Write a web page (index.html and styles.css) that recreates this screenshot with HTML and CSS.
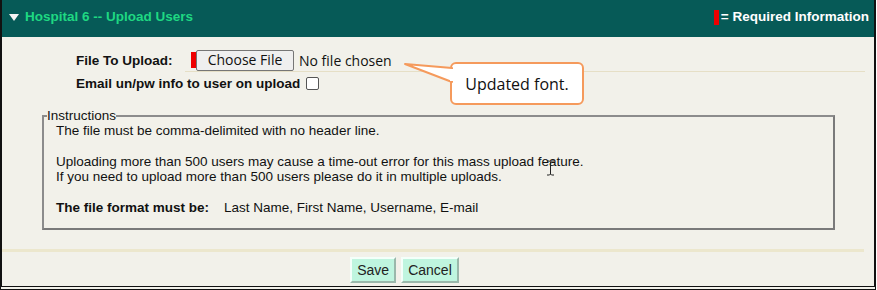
FILE: index.html
```html
<!DOCTYPE html>
<html lang="en">
<head>
  <meta charset="UTF-8" />
  <title>Upload Users</title>
  <link rel="stylesheet" href="styles.css">
</head>
<body>
  <div class="frame">
    <div class="panel-head">
      <div class="head-left">
        <span class="arrow"></span>
        <span class="head-title">Hospital 6 -- Upload Users</span>
      </div>
      <div class="head-right">
        <span class="req-mark"></span>
        <span>= Required Information</span>
      </div>
    </div>

    <div class="panel-body">
      <div class="form-row row-file">
        <label class="row-label">File To Upload:</label>
        <div class="field">
          <span class="req-mark"></span>
          <button class="file-btn">Choose File</button>
          <span class="file-name">No file chosen</span>
        </div>
      </div>
      <div class="form-row row-email">
        <label class="row-label">Email un/pw info to user on upload</label>
        <input type="checkbox" class="check">
      </div>

      <fieldset class="instructions">
        <legend>Instructions</legend>
        <p>The file must be comma-delimited with no header line.</p>
        <p>Uploading more than 500 users may cause a time-out error for this mass upload feature.<br>
        If you need to upload more than 500 users please do it in multiple uploads.</p>
        <p><b class="fmt-label">The file format must be:</b>Last Name, First Name, Username, E-mail</p>
      </fieldset>

      <div class="divider"></div>

      <div class="actions">
        <button class="act-btn">Save</button>
        <button class="act-btn">Cancel</button>
      </div>
    </div>

    <div class="callout">
      <svg class="callout-tail" width="50" height="24" viewBox="0 0 50 24">
        <polygon points="1,2 48,6 48,20" fill="#fff" stroke="#f59a5c" stroke-width="2" stroke-linejoin="round"/>
        <rect x="46" y="7" width="5" height="12" fill="#fff"/>
      </svg>
      <div class="callout-box">Updated font.</div>
    </div>

    <svg class="ibeam" width="9" height="16" viewBox="0 0 9 16">
      <path d="M1 1h2.5l1 1 1-1H8M4.5 2v12M1 15h2.5l1-1 1 1H8" fill="none" stroke="#222" stroke-width="1"/>
    </svg>
  </div>
</body>
</html>
```

FILE: styles.css
```css
* {
  box-sizing: border-box;
}
body {
  margin: 0;
  background: #fff;
  font-family: "Liberation Sans", Arial, sans-serif;
}
.frame {
  position: relative;
  width: 876px;
  height: 290px;
  background: #f2f1ea;
  border-left: 2px solid #111;
  border-right: 2px solid #111;
  border-bottom: 4px double #111;
}
.panel-head {
  height: 37px;
  background: #065a57;
  display: flex;
  justify-content: space-between;
  align-items: flex-start;
  padding: 9px 5px 0 7px;
}
.head-left {
  display: flex;
  align-items: center;
}
.arrow {
  width: 0;
  height: 0;
  border-left: 5px solid transparent;
  border-right: 5px solid transparent;
  border-top: 7px solid #f4f4f4;
  margin-right: 6px;
}
.head-title {
  color: #1fd882;
  font-weight: bold;
  font-size: 13.5px;
  line-height: 16px;
}
.head-right {
  display: flex;
  align-items: center;
  color: #fff;
  font-weight: bold;
  font-size: 13.5px;
  line-height: 16px;
}
.head-right .req-mark {
  height: 15px;
  margin-right: 2px;
}
.req-mark {
  display: inline-block;
  width: 5px;
  height: 16px;
  background: #ee0000;
}
.panel-body {
  padding-top: 12px;
}
.form-row {
  display: flex;
  align-items: center;
  padding-left: 74px;
}
.row-label {
  font-weight: bold;
  font-size: 13.5px;
  color: #111;
}
.row-file .row-label {
  width: 115px;
}
.row-file {
  height: 22px;
}
.field {
  display: flex;
  align-items: center;
  height: 22px;
  border-bottom: 1px solid #e6dfc6;
  width: 680px;
  margin-left: -6px;
  padding-left: 6px;
  margin-top: 1px;
}
.file-btn {
  font-family: "Open Sans", "Liberation Sans", sans-serif;
  font-size: 14px;
  height: 21px;
  width: 98px;
  padding: 0;
  margin: 0 5px 0 0;
  background: #efefef;
  border: 1px solid #767676;
  border-radius: 2px;
  color: #111;
  line-height: 18px;
}
.file-name {
  font-family: "Open Sans", "Liberation Sans", sans-serif;
  font-size: 14px;
  color: #111;
}
.row-email {
  margin-top: 4px;
  height: 16px;
}
.check {
  width: 13px;
  height: 13px;
  margin: 0 0 0 6px;
  appearance: none;
  border: 1px solid #555;
  border-radius: 2px;
  background: #fff;
}
.instructions {
  margin: 18px 0 0 40px;
  width: 793px;
  height: 121px;
  border: 2px solid;
  border-color: #8c8c8c #7a7a7a #7a7a7a #8c8c8c;
  padding: 0 0 0 12px;
  font-size: 13.5px;
  line-height: 15.5px;
  color: #111;
}
.instructions legend {
  font-size: 13.5px;
  padding: 0;
  margin-left: -9px;
  line-height: 14px;
}
.instructions p {
  margin: 0 0 15px 0;
}
.fmt-label {
  margin-right: 15px;
}
.divider {
  height: 3px;
  background: #ece7cd;
  margin: 19px 10px 0 0;
}
.actions {
  display: flex;
  justify-content: center;
  gap: 5px;
  margin-top: 5px;
  padding-right: 67px;
}
.act-btn {
  font-family: "Liberation Sans", Arial, sans-serif;
  font-size: 14px;
  height: 26px;
  padding: 0 5px;
  background: #bff5df;
  border: 2px solid;
  border-color: #f4fffa #9ab8ab #9ab8ab #f4fffa;
  color: #222;
}
.callout {
  position: absolute;
  left: 402px;
  top: 62px;
  display: flex;
  align-items: flex-start;
}
.callout-tail {
  margin-right: -4px;
  position: relative;
  z-index: 1;
}
.callout-box {
  width: 134px;
  height: 43px;
  background: #fff;
  border: 2px solid #f59a5c;
  border-radius: 6px;
  font-family: "Open Sans", "Liberation Sans", sans-serif;
  font-size: 16px;
  color: #111;
  display: flex;
  align-items: center;
  justify-content: center;
}
.ibeam {
  position: absolute;
  left: 544px;
  top: 160px;
}
```
